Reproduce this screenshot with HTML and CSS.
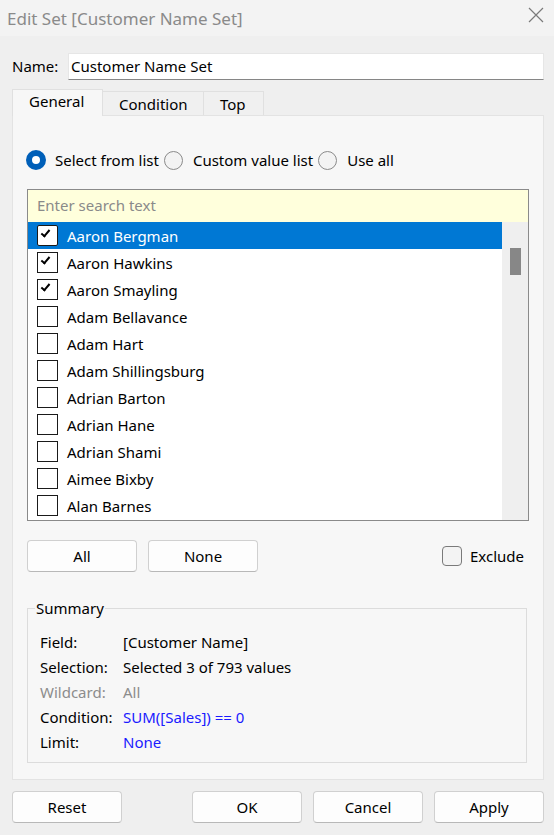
FILE: index.html
```html
<!DOCTYPE html>
<html lang="en">
<head>
<meta charset="UTF-8">
<meta name="viewport" content="width=device-width, initial-scale=1.0">
<title>Edit Set</title>
<link rel="stylesheet" href="styles.css">
</head>
<body>
<div class="titlebar">
    <span class="title">Edit Set [Customer Name Set]</span>
    <svg class="close" width="16" height="16" viewBox="0 0 16 16">
        <path d="M1 1 L15 15 M15 1 L1 15" stroke="#7a7a7a" stroke-width="1.2" fill="none"/>
    </svg>
</div>

<div class="dialog">
    <div class="name-row">
        <label>Name:</label>
        <div class="name-input">Customer Name Set</div>
    </div>

    <div class="tabs">
        <div class="tab active">General</div>
        <div class="tab">Condition</div>
        <div class="tab">Top</div>
    </div>

    <div class="panel">
        <div class="radios">
            <div class="radio checked"><span class="dot"></span>Select from list</div>
            <div class="radio"><span class="dot"></span>Custom value list</div>
            <div class="radio"><span class="dot"></span>Use all</div>
        </div>

        <div class="listbox">
            <div class="search">Enter search text</div>
            <div class="list-body">
                <div class="rows">
                    <div class="row selected"><span class="box checked"></span>Aaron Bergman</div>
                    <div class="row"><span class="box checked"></span>Aaron Hawkins</div>
                    <div class="row"><span class="box checked"></span>Aaron Smayling</div>
                    <div class="row"><span class="box"></span>Adam Bellavance</div>
                    <div class="row"><span class="box"></span>Adam Hart</div>
                    <div class="row"><span class="box"></span>Adam Shillingsburg</div>
                    <div class="row"><span class="box"></span>Adrian Barton</div>
                    <div class="row"><span class="box"></span>Adrian Hane</div>
                    <div class="row"><span class="box"></span>Adrian Shami</div>
                    <div class="row"><span class="box"></span>Aimee Bixby</div>
                    <div class="row"><span class="box"></span>Alan Barnes</div>
                </div>
                <div class="scrollbar"><div class="thumb"></div></div>
            </div>
        </div>

        <div class="list-actions">
            <button class="button small">All</button>
            <button class="button small">None</button>
            <div class="exclude"><span class="round-box"></span>Exclude</div>
        </div>

        <fieldset class="summary">
            <legend>Summary</legend>
            <div class="summary-grid">
                <span>Field:</span><span>[Customer Name]</span>
                <span>Selection:</span><span>Selected 3 of 793 values</span>
                <span class="muted">Wildcard:</span><span class="muted">All</span>
                <span>Condition:</span><span class="blue">SUM([Sales]) == 0</span>
                <span>Limit:</span><span class="blue">None</span>
            </div>
        </fieldset>
    </div>

    <div class="footer">
        <button class="button">Reset</button>
        <div class="footer-right">
            <button class="button">OK</button>
            <button class="button">Cancel</button>
            <button class="button">Apply</button>
        </div>
    </div>
</div>
</body>
</html>
```

FILE: styles.css
```css
body {
    margin: 0;
    background-color: #efefef;
    font-family: "Noto Sans", "Open Sans", sans-serif;
    font-size: 15px;
    color: #000;
}

.titlebar {
    height: 36px;
    background-color: #f3f3f3;
    display: flex;
    align-items: center;
    justify-content: space-between;
    padding: 0 10px 0 7px;
}

.title {
    font-size: 17px;
    color: #8a8a8a;
}

.close {
    margin-top: -6px;
}

.dialog {
    padding: 0 10px 0 12px;
}

.name-row {
    display: flex;
    align-items: center;
    margin-top: 17px;
    height: 26px;
}

.name-row label {
    width: 56px;
}

.name-input {
    flex: 1;
    height: 25px;
    line-height: 25px;
    background-color: #fff;
    border: 1px solid #e6e6e6;
    border-bottom: 1px solid #868686;
    padding-left: 2px;
}

.tabs {
    display: flex;
    align-items: flex-end;
    margin-top: 10px;
    height: 26px;
    position: relative;
    z-index: 1;
}

.tab {
    height: 23px;
    line-height: 24px;
    padding: 0 24px 0 16px;
    border: 1px solid #e0e0e0;
    border-bottom: none;
    background-color: #f0f0f0;
    margin-left: -1px;
}

.tab:nth-child(2) {
    width: 60px;
}

.tab:nth-child(3) {
    width: 19px;
}

.tab.active {
    height: 26px;
    line-height: 22px;
    width: 49px;
    margin-left: 0;
    background-color: #f7f7f7;
    margin-bottom: -1px;
}

.panel {
    height: 663px;
    background-color: #f7f7f7;
    border: 1px solid #e3e3e3;
    padding: 0 14px;
}

.radios {
    display: flex;
    align-items: center;
    margin-top: 33px;
    height: 22px;
}

.radio {
    display: flex;
    align-items: center;
    margin-right: 5px;
}

.radio .dot {
    width: 19px;
    height: 19px;
    border: 1px solid #8a8a8a;
    border-radius: 50%;
    background-color: #f3f3f3;
    margin-right: 10px;
    box-sizing: border-box;
}

.radio.checked .dot {
    width: 20px;
    height: 20px;
    border: 6px solid #005fb8;
    background-color: #fff;
    margin-left: -1px;
    margin-right: 9px;
}

.listbox {
    margin-top: 18px;
    border: 1px solid #8a8a8a;
    background-color: #fff;
    width: 500px;
}

.search {
    height: 32px;
    line-height: 31px;
    background-color: #ffffdc;
    color: #8a8a8a;
    padding-left: 9px;
}

.list-body {
    display: flex;
    height: 298px;
}

.rows {
    flex: 1;
}

.row {
    height: 27px;
    display: flex;
    align-items: center;
    padding-left: 9px;
    white-space: nowrap;
}

.row.selected {
    background-color: #0078d4;
    color: #fff;
}

.box {
    width: 19px;
    height: 19px;
    border: 1px solid #1a1a1a;
    background-color: #fff;
    margin-right: 9px;
    position: relative;
    flex-shrink: 0;
}

.row.selected .box {
    border-radius: 2px;
}

.box.checked::after {
    content: "";
    position: absolute;
    left: 5px;
    top: 2px;
    width: 3px;
    height: 7px;
    border: solid #000;
    border-width: 0 2px 2px 0;
    transform: rotate(40deg);
}

.scrollbar {
    width: 26px;
    background-color: #efefef;
    position: relative;
}

.thumb {
    position: absolute;
    left: 8px;
    top: 26px;
    width: 11px;
    height: 27px;
    background-color: #878787;
}

.list-actions {
    display: flex;
    align-items: center;
    margin-top: 19px;
    height: 32px;
}

.button {
    font-family: inherit;
    font-size: 15px;
    color: #000;
    background-color: #fdfdfd;
    border: 1px solid #d0d0d0;
    border-bottom-color: #b8b8b8;
    border-radius: 4px;
    width: 110px;
    height: 32px;
    padding: 0;
}

.button.small {
    margin-right: 11px;
}

.exclude {
    margin-left: auto;
    display: flex;
    align-items: center;
    margin-right: 5px;
}

.round-box {
    width: 18px;
    height: 18px;
    border: 1px solid #7a7a7a;
    border-radius: 4px;
    background-color: #f3f3f3;
    margin-right: 8px;
}

.summary {
    margin: 27px 0 0 0;
    padding: 12px 0 8px 12px;
    border: 1px solid #dcdcdc;
    width: 486px;
}

.summary legend {
    padding: 0 1px;
    margin-left: -5px;
    line-height: 18px;
}

.summary-grid {
    display: grid;
    grid-template-columns: 83px 1fr;
    grid-auto-rows: 25px;
    align-items: center;
}

.muted {
    color: #8c8c8c;
}

.blue {
    color: #1a1aff;
}

.footer {
    display: flex;
    justify-content: space-between;
    margin-top: 11px;
}

.footer-right {
    display: flex;
    gap: 11px;
}
```
